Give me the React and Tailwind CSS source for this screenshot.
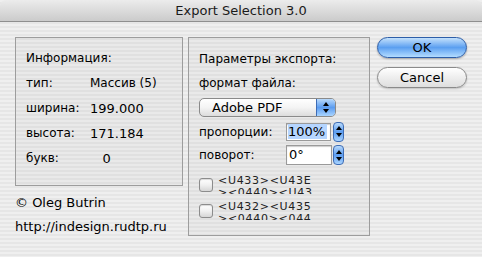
import React from 'react'

const font = { fontFamily: '"DejaVu Sans", "Noto Sans", sans-serif' }

function Arrows() {
  return (
    <>
      <div className="w-0 h-0 border-l-[3px] border-r-[3px] border-b-[4px] border-l-transparent border-r-transparent border-b-black" />
      <div className="w-0 h-0 border-l-[3px] border-r-[3px] border-t-[4px] border-l-transparent border-r-transparent border-t-black" />
    </>
  )
}

function Stepper() {
  return (
    <div className="w-[11px] h-[20px] rounded-[4px] border border-[#3d6cb5] bg-gradient-to-b from-[#b9dafb] via-[#5b9cf0] to-[#a9d4ff] flex flex-col items-center justify-center gap-[3px]">
      <Arrows />
    </div>
  )
}

function Checkbox() {
  return (
    <div className="w-[14px] h-[14px] shrink-0 rounded-[3px] border border-[#8c8c8c] bg-gradient-to-b from-white via-[#f0f0f0] to-[#d6d6d6] shadow-[inset_0_1px_1px_rgba(0,0,0,0.15)]" />
  )
}

function CheckRow({ line1, line2, mt }) {
  return (
    <div className={`flex items-center gap-[5px] ${mt}`}>
      <Checkbox />
      <div className="h-[19px] w-[94px] overflow-hidden text-[11px] leading-[12px] tracking-[0.7px] text-[#222]">
        <div className="whitespace-nowrap">{line1}</div>
        <div className="whitespace-nowrap">{line2}</div>
      </div>
    </div>
  )
}

export default function App() {
  return (
    <div
      className="w-[482px] h-[257px] overflow-hidden text-[13px] text-black bg-[repeating-linear-gradient(180deg,#efefef_0px,#efefef_2px,#e6e6e6_2px,#e6e6e6_4px)]"
      style={font}
    >
      {/* title bar */}
      <div className="h-[22px] rounded-t-[6px] bg-gradient-to-b from-[#ececec] to-[#cbcbcb] border-b border-[#8e8e8e] flex items-center justify-center text-[13px] text-[#1a1a1a]">
        Export Selection 3.0
      </div>

      <div className="flex pl-[15px] pt-[15px]">
        {/* left column */}
        <div className="w-[168px] flex flex-col">
          <div className="h-[149px] border border-[#9d9d9d] bg-black/[0.025] pl-[10px] pt-[8px]">
            <div className="leading-[25px] text-[12px]">Информация:</div>
            {[
              ['тип:', 'Массив (5)'],
              ['ширина:', '199.000'],
              ['высота:', '171.184'],
              ['букв:', '\u00a0\u00a0\u00a00'],
            ].map(([k, v]) => (
              <div key={k} className="flex leading-[25px]">
                <span className="w-[64px] text-[12px]">{k}</span>
                <span className={v.startsWith('М') ? 'text-[12px]' : ''}>{v}</span>
              </div>
            ))}
          </div>
          <div className="mt-[7px] leading-[20px]">© Oleg Butrin</div>
          <div className="mt-[4px] leading-[20px]">http://indesign.rudtp.ru</div>
        </div>

        {/* middle box */}
        <div className="ml-[5px] w-[182px] h-[199px] border border-[#9d9d9d] bg-black/[0.025] pl-[10px] pt-[10px] flex flex-col">
          <div className="leading-[22px] text-[12px]">Параметры экспорта:</div>
          <div className="leading-[22px] mt-[2px] text-[12px]">формат файла:</div>
          <div className="mt-[4px] w-[137px] h-[19px] rounded-[5px] border border-[#8a8a8a] bg-gradient-to-b from-white via-[#f4f4f4] to-[#dcdcdc] flex items-center overflow-hidden">
            <span className="pl-[12px] flex-1">Adobe PDF</span>
            <div className="w-[19px] h-full bg-gradient-to-b from-[#b9dafb] via-[#5b9cf0] to-[#a9d4ff] border-l border-[#3d6cb5] flex flex-col items-center justify-center gap-[3px]">
              <Arrows />
            </div>
          </div>
          <div className="flex items-center mt-[5px] h-[19px]">
            <span className="w-[87px] text-[12px]">пропорции:</span>
            <div className="w-[45px] h-[18px] border border-[#9a9a9a] bg-white shadow-[inset_0_1px_1px_rgba(0,0,0,0.2)] flex items-center pl-[1px]">
              <span className="bg-[#b5d5ff] leading-[15px] pr-[2px]">100%</span>
            </div>
            <div className="ml-[2px]"><Stepper /></div>
          </div>
          <div className="flex items-center mt-[4px] h-[20px]">
            <span className="w-[87px] text-[12px]">поворот:</span>
            <div className="w-[46px] h-[20px] border border-[#9a9a9a] bg-white shadow-[inset_0_1px_1px_rgba(0,0,0,0.2)] flex items-center pl-[2px]">
              0°
            </div>
            <div className="ml-[1px]"><Stepper /></div>
          </div>
          <CheckRow line1="<U433><U43E" line2="><0440><U43C" mt="mt-[10px]" />
          <CheckRow line1="<U432><U435" line2="><0440><044" mt="mt-[7px]" />
        </div>

        {/* buttons */}
        <div className="ml-[7px] flex flex-col gap-[9px]">
          <button className="w-[90px] h-[21px] rounded-full border border-[#2d5ea8] bg-gradient-to-b from-[#c4e1fb] via-[#5b9ff0] to-[#b3dcff] text-[13px] leading-none text-black shadow-[0_1px_2px_rgba(0,0,0,0.3)]" style={font}>
            OK
          </button>
          <button className="w-[90px] h-[21px] rounded-full border border-[#8a8a8a] bg-gradient-to-b from-white via-[#eeeeee] to-[#dedede] text-[13px] leading-none text-black shadow-[0_1px_2px_rgba(0,0,0,0.2)]" style={font}>
            Cancel
          </button>
        </div>
      </div>
    </div>
  )
}
